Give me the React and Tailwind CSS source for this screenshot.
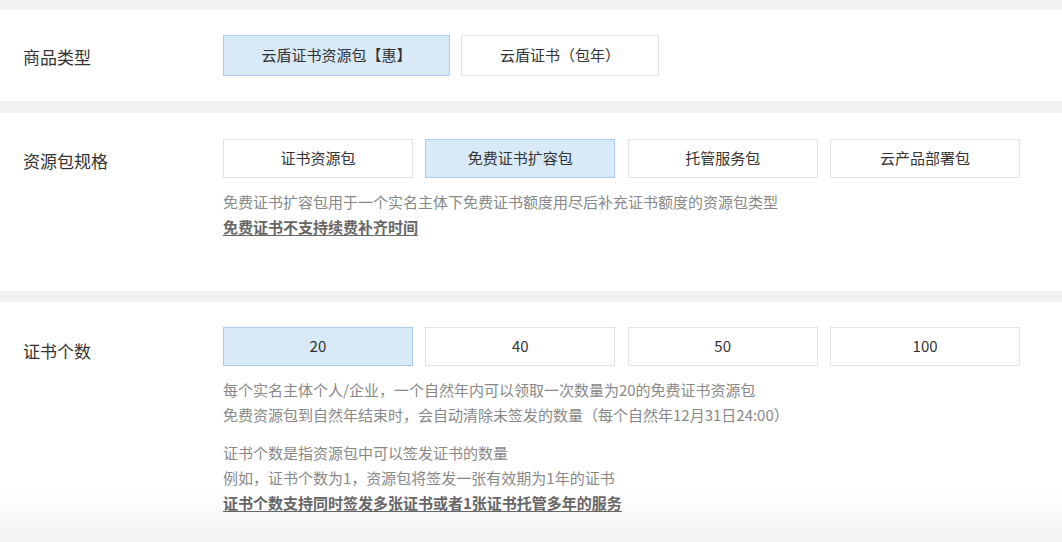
import React from "react";

const font = { fontFamily: '"Noto Sans CJK SC", "Noto Sans", Roboto, sans-serif' };

function Opt({ children, active, className = "" }) {
  return (
    <div
      className={
        "flex items-center justify-center text-[15px] text-[#333] border " +
        (active ? "bg-[#d8e9f8] border-[#a9cdee] " : "bg-white border-[#e3e3e3] ") +
        className
      }
    >
      {children}
    </div>
  );
}

export default function App() {
  return (
    <div style={font} className="w-[1062px] h-[542px] overflow-hidden bg-[#f0f1f3] pt-[10px]">
      {/* Section 1 */}
      <div className="bg-white h-[91px] flex pt-[25px]">
        <div className="w-[223px] pl-[23px] pt-[9px] text-[17px] text-[#333]">商品类型</div>
        <div className="flex gap-[11px]">
          <Opt active className="w-[227px] h-[41px]">云盾证书资源包【惠】</Opt>
          <Opt className="w-[198px] h-[41px] border-[#cfcfcf]">云盾证书（包年）</Opt>
        </div>
      </div>

      {/* Section 2 */}
      <div className="bg-white h-[178px] mt-[12px] flex pt-[26px]">
        <div className="w-[223px] pl-[23px] pt-[9px] text-[17px] text-[#333]">资源包规格</div>
        <div className="flex flex-col">
          <div className="grid grid-cols-4 gap-x-[12.5px] w-[797px]">
            <Opt className="h-[39px]">证书资源包</Opt>
            <Opt active className="h-[39px]">免费证书扩容包</Opt>
            <Opt className="h-[39px]">托管服务包</Opt>
            <Opt className="h-[39px]">云产品部署包</Opt>
          </div>
          <div className="mt-[11px] text-[15px] leading-[25px] text-[#888]">
            <div>免费证书扩容包用于一个实名主体下免费证书额度用尽后补充证书额度的资源包类型</div>
            <div className="font-bold text-[#666] underline underline-offset-2">免费证书不支持续费补齐时间</div>
          </div>
        </div>
      </div>

      {/* Section 3 */}
      <div className="h-[240px] mt-[11px] flex pt-[25px] bg-linear-to-b from-white from-[78%] to-[#f3f3f3]">
        <div className="w-[223px] pl-[23px] pt-[11px] text-[17px] text-[#333]">证书个数</div>
        <div className="flex flex-col">
          <div className="grid grid-cols-4 gap-x-[12.5px] w-[797px]">
            <Opt active className="h-[39px]">20</Opt>
            <Opt className="h-[39px]">40</Opt>
            <Opt className="h-[39px]">50</Opt>
            <Opt className="h-[39px]">100</Opt>
          </div>
          <div className="mt-[11px] text-[15px] leading-[25px] text-[#888]">
            <div>每个实名主体个人/企业，一个自然年内可以领取一次数量为20的免费证书资源包</div>
            <div>免费资源包到自然年结束时，会自动清除未签发的数量（每个自然年12月31日24:00）</div>
            <div className="mt-[13px]">证书个数是指资源包中可以签发证书的数量</div>
            <div>例如，证书个数为1，资源包将签发一张有效期为1年的证书</div>
            <div className="font-bold text-[#666] underline underline-offset-2">证书个数支持同时签发多张证书或者1张证书托管多年的服务</div>
          </div>
        </div>
      </div>
    </div>
  );
}
